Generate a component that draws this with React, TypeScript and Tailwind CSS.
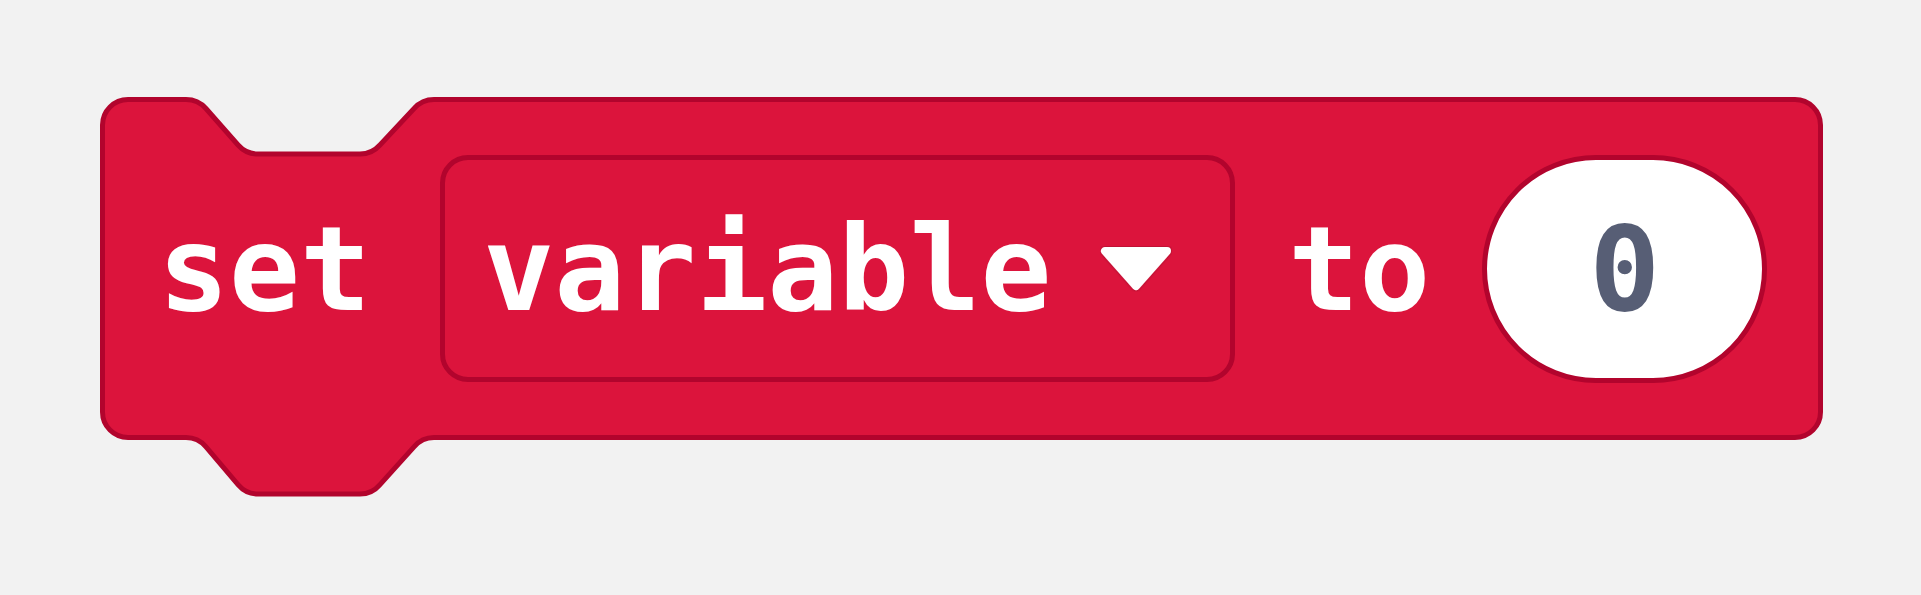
import React from "react";

const STROKE = "#b2042d";

function BlockShape() {
  const d = [
    "M 2.5 28",
    "A 25.5 25.5 0 0 1 28 2.5",
    "L 86 2.5",
    "Q 98 2.5 105.93 11.5",
    "L 138.07 48",
    "Q 146 57 158 57",
    "L 260 57",
    "Q 272 57 279.93 48",
    "L 314.07 11.5",
    "Q 322 2.5 334 2.5",
    "L 1695 2.5",
    "A 25.5 25.5 0 0 1 1720.5 28",
    "L 1720.5 315",
    "A 25.5 25.5 0 0 1 1695 340.5",
    "L 334 340.5",
    "Q 322 340.5 314.23 349.64",
    "L 279.77 387.86",
    "Q 272 397 260 397",
    "L 158 397",
    "Q 146 397 138.23 387.86",
    "L 105.77 349.64",
    "Q 98 340.5 86 340.5",
    "L 28 340.5",
    "A 25.5 25.5 0 0 1 2.5 315",
    "Z",
  ].join(" ");
  return (
    <svg
      className="absolute left-0 top-0 overflow-visible"
      width={1723}
      height={400}
      viewBox="0 0 1723 400"
    >
      <path d={d} fill="#dc143c" stroke={STROKE} strokeWidth={5} strokeLinejoin="round" />
    </svg>
  );
}

function Arrow() {
  return (
    <svg width={72} height={46} viewBox="0 0 72 46" className="ml-[49px] shrink-0">
      <defs>
        <filter id="sh" x="-20%" y="-20%" width="140%" height="140%">
          <feGaussianBlur in="SourceAlpha" stdDeviation="1.5" />
          <feComponentTransfer>
            <feFuncA type="linear" slope="0.35" />
          </feComponentTransfer>
          <feMerge>
            <feMergeNode />
            <feMergeNode in="SourceGraphic" />
          </feMerge>
        </filter>
      </defs>
      <polygon
        points="5,5 67,5 36,40"
        fill="#ffffff"
        stroke="#ffffff"
        strokeWidth={8}
        strokeLinejoin="round"
        filter="url(#sh)"
      />
    </svg>
  );
}

export default function App() {
  const mono = { fontFamily: '"DejaVu Sans Mono", monospace' };
  return (
    <div className="w-full h-[595px] bg-[#f2f2f2] pl-[100px] pt-[97px] overflow-hidden">
      <div className="relative flex items-center w-[1723px] h-[343px]">
        <BlockShape />
        <span
          className="relative ml-[58px] text-white text-[118px] leading-none font-bold"
          style={mono}
        >
          set
        </span>
        <div className="relative ml-[69px] w-[795px] h-[227px] shrink-0 rounded-[28px] border-[5px] border-[#b2042d] flex items-center pl-[38px]">
          <span className="text-white text-[118px] leading-none font-bold" style={mono}>
            variable
          </span>
          <Arrow />
        </div>
        <span
          className="relative ml-[53px] text-white text-[118px] leading-none font-bold"
          style={mono}
        >
          to
        </span>
        <div className="relative ml-[52px] w-[285px] h-[228px] shrink-0 rounded-full bg-white border-[5px] border-[#b2042d] flex items-center justify-center">
          <span className="text-[#575e75] text-[118px] leading-none font-bold" style={mono}>
            0
          </span>
        </div>
      </div>
    </div>
  );
}
